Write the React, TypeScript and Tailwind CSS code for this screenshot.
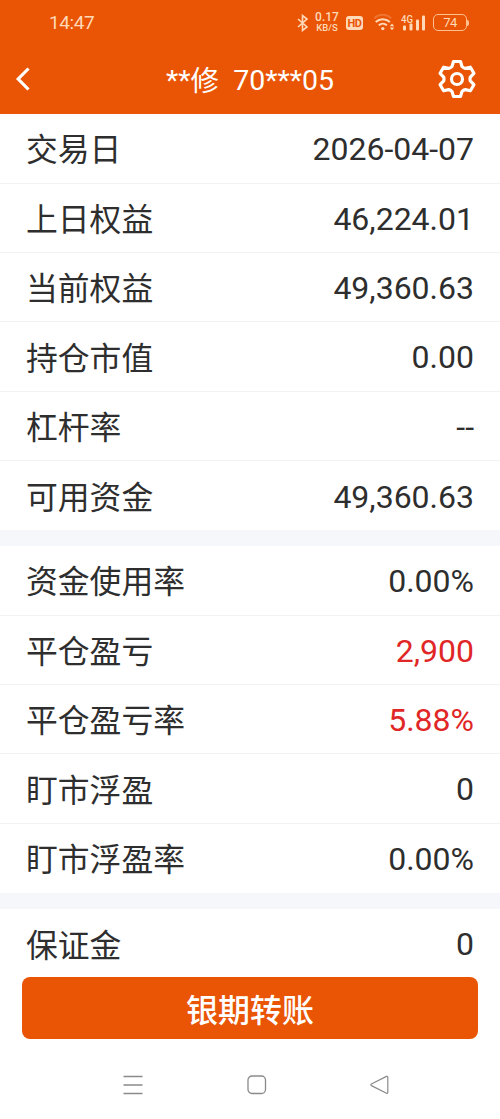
type Row = { label: string; value: string; red?: boolean };

const groups: Row[][] = [
  [
    { label: "交易日", value: "2026-04-07" },
    { label: "上日权益", value: "46,224.01" },
    { label: "当前权益", value: "49,360.63" },
    { label: "持仓市值", value: "0.00" },
    { label: "杠杆率", value: "--" },
    { label: "可用资金", value: "49,360.63" },
  ],
  [
    { label: "资金使用率", value: "0.00%" },
    { label: "平仓盈亏", value: "2,900", red: true },
    { label: "平仓盈亏率", value: "5.88%", red: true },
    { label: "盯市浮盈", value: "0" },
    { label: "盯市浮盈率", value: "0.00%" },
  ],
  [{ label: "保证金", value: "0" }],
];

function StatusBar() {
  return (
    <div className="flex h-[45px] items-center pl-[49px] pr-[31px] text-[#ffd9b8]">
      <span className="text-[19px] leading-none tracking-[-0.4px]">14:47</span>
      <div className="ml-auto flex items-center">
        {/* bluetooth */}
        <svg width="12" height="18" viewBox="0 0 12 18" fill="none" stroke="currentColor" strokeWidth="1.6">
          <path d="M1 5l9 8-4.500 3.500V1.500L10 5l-9 8" />
        </svg>
        <div className="ml-[6px] flex w-[24px] flex-col items-center font-medium">
          <span className="text-[12px] leading-[11px]">0.17</span>
          <span className="text-[9.500px] leading-[10px]">KB/S</span>
        </div>
        <span className="ml-[7px] mt-px flex h-[14px] w-[17px] items-center justify-center rounded-[3px] bg-[#ffd9b8] text-[11px] font-bold leading-none tracking-[-0.5px] text-[#e95504]">
          HD
        </span>
        {/* wifi with traffic arrows */}
        <svg className="ml-[10px]" width="23" height="18" viewBox="0 0 22 18" fill="none" stroke="currentColor" strokeWidth="2">
          <path d="M.8 4.200C5.500-.4 13-.4 17.700 4.200" opacity=".25" />
          <path d="M2.200 8c4-3.800 10.200-3.800 14.200 0M5.300 11.400c2.300-2.200 5.800-2.200 8.100 0" />
          <circle cx="9.300" cy="14.600" r="1.700" fill="currentColor" stroke="none" />
          <path d="M16.300 12.200l2.200-2.700 2.200 2.700zM16.300 13.600l2.200 2.700 2.200-2.700z" fill="currentColor" stroke="none" />
        </svg>
        {/* signal */}
        <svg className="ml-[5px]" width="26" height="18" viewBox="0 0 26 18" fill="currentColor">
          <text x="0" y="8.500" fontSize="11" fontWeight="500" textLength="12" lengthAdjust="spacingAndGlyphs">4G</text>
          <rect x="2" y="11.500" width="3" height="5" rx="1" />
          <rect x="8.500" y="9.500" width="3" height="7" rx="1" />
          <rect x="15" y="5.500" width="3" height="11" rx="1" />
          <rect x="21" y="1.500" width="3" height="15" rx="1" />
        </svg>
        <div className="ml-[6px] flex h-[17px] w-[34px] items-center justify-center rounded-[5px] border-[1.5px] border-[#ffc08f] text-[13px] leading-none tracking-[-0.6px]">
          74
        </div>
        <div className="h-[6px] w-[2px] rounded-r-sm bg-[#ffc08f]" />
      </div>
    </div>
  );
}

function Header() {
  return (
    <div className="grid h-[69px] grid-cols-[60px_1fr_60px] items-center text-white">
      <svg className="ml-[15px] mt-[-2px]" width="16" height="26" viewBox="0 0 16 26" fill="none" stroke="currentColor" strokeWidth="3.200">
        <path d="M13.500 2.500L3.200 13l10.300 10.500" />
      </svg>
      <h1 className="whitespace-pre pt-[3px] text-center text-[28.500px] leading-none">
        **<span className="relative top-px">修</span>  70***05
      </h1>
      <svg className="ml-[-3px] mt-[-2px]" width="40" height="40" viewBox="-20 -20 40 40" fill="none" stroke="currentColor" strokeWidth="3.200" strokeLinejoin="round">
        <path d="M-3.500-17.500H3.500L5-12.500Q6.400-11 8.300-10.600L13.400-11.800 16.900-5.700 13.300-1.900Q12.700 0 13.300 1.900L16.900 5.700 13.400 11.800 8.300 10.600Q6.400 11 5 12.500L3.500 17.500H-3.500L-5 12.500Q-6.400 11-8.300 10.600L-13.400 11.800-16.900 5.700-13.300 1.900Q-12.700 0-13.300-1.900L-16.900-5.700-13.400-11.800-8.300-10.600Q-6.400-11-5-12.500z" />
        <circle r="5.500" />
      </svg>
    </div>
  );
}

export default function App() {
  return (
    <div className="flex h-[1119px] w-[500px] flex-col overflow-hidden bg-white font-[Roboto,'Noto_Sans_CJK_SC',sans-serif]">
      <header className="shrink-0 bg-[#e95504]">
        <StatusBar />
        <Header />
      </header>

      <main className="flex h-[863px] shrink-0 flex-col gap-[15.800px] overflow-hidden bg-[#f5f7fa]">
        {groups.map((rows, i) => (
          <section key={i} className="bg-white first:pt-[0.200px]">
            {rows.map((row) => (
              <div
                key={row.label}
                className="flex h-[69.370px] items-center justify-between border-b border-[#f1f2f4] pl-[26px] pr-[26px] pt-[2px] text-[32px] leading-none text-[#2e2e2e] last:border-b-0"
              >
                <span className="pt-[4px] text-[31.800px]">{row.label}</span>
                <span className={row.red ? "text-[#e02626]" : ""}>{row.value}</span>
              </div>
            ))}
          </section>
        ))}
      </main>

      <button type="button" className="mx-[22px] h-[62px] shrink-0 rounded-lg bg-[#e95504] pt-[6px] text-[32px] font-medium leading-none text-white">
        银期转账
      </button>

      {/* system navigation */}
      <nav className="flex h-[80px] shrink-0 items-center pl-[123px] pt-[11px] text-[#8a8a8a]">
        <svg width="20" height="20" viewBox="0 0 20 20" stroke="currentColor" strokeWidth="1.300">
          <path d="M.5 1.500h19M.5 10h19M.5 18.500h19" />
        </svg>
        <svg className="ml-[104px]" width="20" height="20" viewBox="0 0 20 20" fill="none" stroke="currentColor" strokeWidth="1.300">
          <rect x="1" y="1" width="17.500" height="17.500" rx="4" />
        </svg>
        <svg className="ml-[103px]" width="19" height="20" viewBox="0 0 19 20" fill="none" stroke="currentColor" strokeWidth="1.200" strokeLinejoin="round">
          <path d="M16.500 1.400Q17.800.9 17.800 2.300V17.300Q17.800 18.700 16.500 18.200L1.400 10.600Q.3 9.800 1.400 9z" />
        </svg>
      </nav>
    </div>
  );
}
